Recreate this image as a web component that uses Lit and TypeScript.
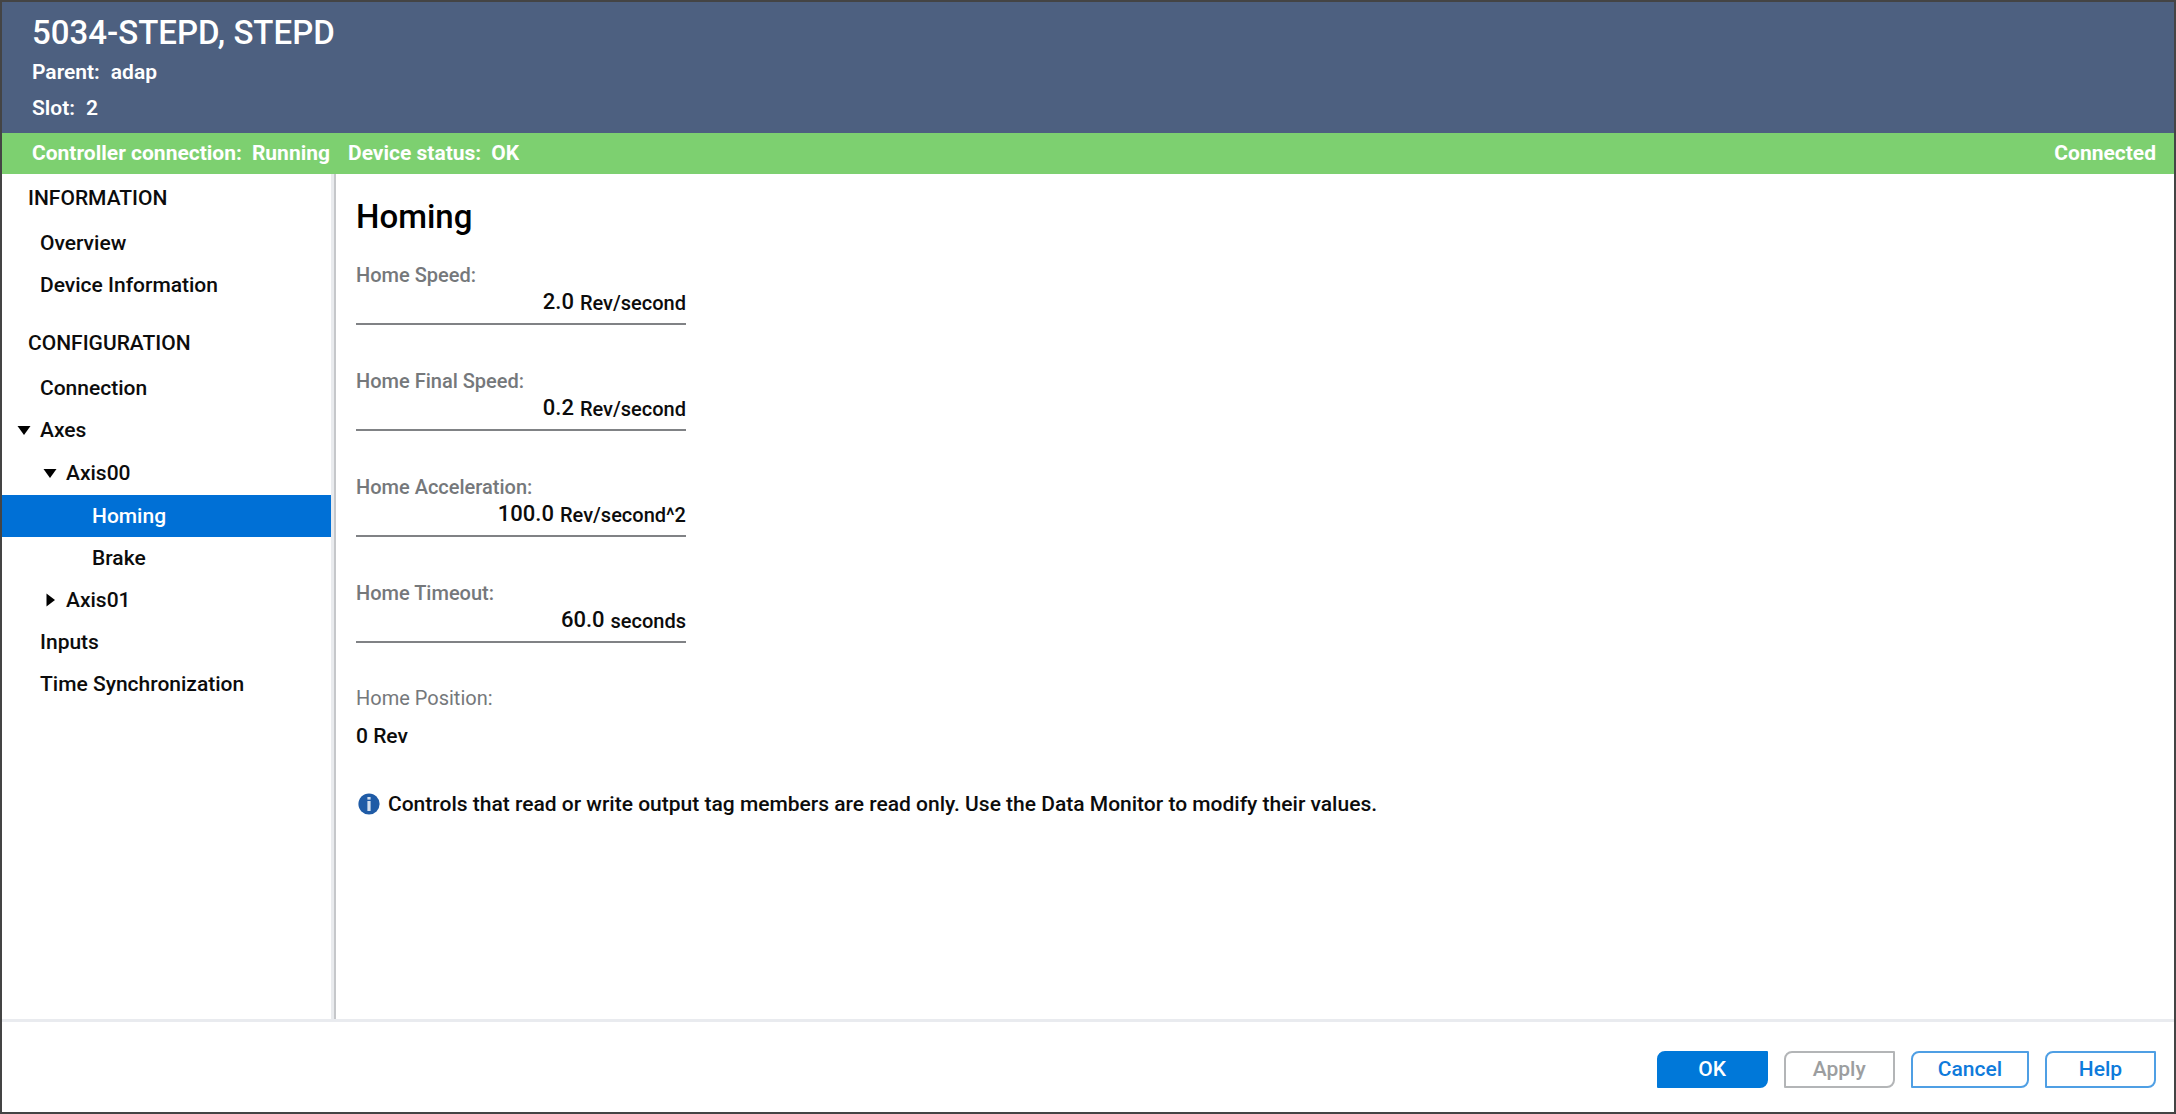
import { LitElement, html, css, svg, nothing } from "lit";
import { customElement, property, state } from "lit/decorators.js";
import { classMap } from "lit/directives/class-map.js";

interface NavNode {
  id: string;
  label: string;
  children?: NavNode[];
}

interface NavSection {
  title: string;
  items: NavNode[];
}

interface Field {
  id: string;
  label: string;
  value: string;
  unit: string;
}

const SECTIONS: NavSection[] = [
  {
    title: "INFORMATION",
    items: [
      { id: "overview", label: "Overview" },
      { id: "device-information", label: "Device Information" },
    ],
  },
  {
    title: "CONFIGURATION",
    items: [
      { id: "connection", label: "Connection" },
      {
        id: "axes",
        label: "Axes",
        children: [
          {
            id: "axis00",
            label: "Axis00",
            children: [
              { id: "homing", label: "Homing" },
              { id: "brake", label: "Brake" },
            ],
          },
          {
            id: "axis01",
            label: "Axis01",
            children: [],
          },
        ],
      },
      { id: "inputs", label: "Inputs" },
      { id: "time-synchronization", label: "Time Synchronization" },
    ],
  },
];

const FIELDS: Field[] = [
  { id: "home-speed", label: "Home Speed:", value: "2.0", unit: "Rev/second" },
  { id: "home-final-speed", label: "Home Final Speed:", value: "0.2", unit: "Rev/second" },
  { id: "home-acceleration", label: "Home Acceleration:", value: "100.0", unit: "Rev/second^2" },
  { id: "home-timeout", label: "Home Timeout:", value: "60.0", unit: "seconds" },
];

@customElement("device-header")
class DeviceHeader extends LitElement {
  static styles = css`
    :host {
      display: block;
      color: #fff;
      font-weight: 600;
    }
    .banner {
      background: #4d6080;
      padding: 11px 30px 7px;
    }
    .title {
      margin: 0 0 1px;
      font-size: 33px;
      line-height: 40px;
      font-weight: 500;
    }
    .facts {
      margin: 0;
    }
    .fact {
      display: flex;
      gap: 11px;
      font-size: 21px;
      line-height: 36px;
    }
    .fact-value {
      margin: 0;
    }
    .status {
      display: flex;
      gap: 18px;
      background: #7dd070;
      padding: 0 18px 0 30px;
      font-size: 21px;
      line-height: 41px;
      font-weight: 700;
    }
    .pair {
      display: flex;
      gap: 10px;
    }
    .connected {
      margin-left: auto;
    }
  `;

  render() {
    return html`
      <header class="banner">
        <h1 class="title">5034-STEPD, STEPD</h1>
        <dl class="facts">
          <div class="fact"><dt>Parent:</dt><dd class="fact-value">adap</dd></div>
          <div class="fact"><dt>Slot:</dt><dd class="fact-value">2</dd></div>
        </dl>
      </header>
      <div class="status" role="status">
        <span class="pair"><span>Controller connection:</span><span>Running</span></span>
        <span class="pair"><span>Device status:</span><span>OK</span></span>
        <span class="connected">Connected</span>
      </div>
    `;
  }
}

@customElement("device-nav")
class DeviceNav extends LitElement {
  @property() selected = "homing";
  @state() private open = new Set(["axes", "axis00"]);

  static styles = css`
    :host {
      display: block;
      font-size: 21px;
      font-weight: 500;
      color: #0c0c0c;
    }
    .section-title {
      margin: 0;
      padding: 6px 0 6px 26px;
      font-size: 21px;
      line-height: 36px;
      font-weight: 500;
    }
    .list {
      list-style: none;
      margin: 0;
      padding: 0 0 13px;
    }
    .list .list {
      padding: 1px 0 0;
    }
    .row {
      display: flex;
      align-items: center;
      height: 42px;
    }
    .level-0 {
      padding-left: 12px;
    }
    .level-1 {
      padding-left: 38px;
    }
    .level-2 {
      padding-left: 64px;
    }
    .row.selected {
      background: #0070d6;
      color: #fff;
    }
    .slot {
      flex: none;
      width: 26px;
      height: 20px;
    }
    .toggle {
      display: flex;
      align-items: center;
      border: 0;
      padding: 0 0 0 3px;
      background: none;
      color: inherit;
      cursor: pointer;
    }
    .arrow {
      display: block;
      width: 14px;
      height: 14px;
      fill: #000;
    }
    .link {
      flex: 1;
      color: inherit;
      text-decoration: none;
      line-height: 42px;
    }
  `;

  private toggle(id: string) {
    const next = new Set(this.open);
    if (!next.delete(id)) next.add(id);
    this.open = next;
  }

  private renderArrow(expanded: boolean) {
    return html`<svg class="arrow" viewBox="0 0 14 14" aria-hidden="true">
      ${expanded ? svg`<path d="M0.5 3h13L7 12z" />` : svg`<path d="M3.5 0.5v13L12 7z" />`}
    </svg>`;
  }

  private renderNode(node: NavNode, level: number): unknown {
    const expanded = this.open.has(node.id);
    const selected = node.id === this.selected;
    return html`<li>
      <div class=${classMap({ row: true, [`level-${level}`]: true, selected })}>
        ${node.children
          ? html`<button
              class="slot toggle"
              type="button"
              aria-label="Toggle ${node.label}"
              aria-expanded=${expanded ? "true" : "false"}
              @click=${() => this.toggle(node.id)}
            >
              ${this.renderArrow(expanded)}
            </button>`
          : html`<span class="slot"></span>`}
        <a class="link" href="#${node.id}" aria-current=${selected ? "page" : nothing}>${node.label}</a>
      </div>
      ${node.children?.length && expanded
        ? html`<ul class="list">${node.children.map((child) => this.renderNode(child, level + 1))}</ul>`
        : nothing}
    </li>`;
  }

  render() {
    return html`<nav aria-label="Device pages">
      ${SECTIONS.map(
        (section) => html`
          <h2 class="section-title">${section.title}</h2>
          <ul class="list">${section.items.map((item) => this.renderNode(item, 0))}</ul>
        `
      )}
    </nav>`;
  }
}

@customElement("homing-page")
class HomingPage extends LitElement {
  static styles = css`
    :host {
      display: block;
      padding: 20px 20px 40px;
      font-weight: 500;
      color: #0c0c0c;
    }
    .title {
      margin: 0 0 23px;
      font-size: 33px;
      line-height: 46px;
      font-weight: 500;
      color: #000;
    }
    .fields {
      display: grid;
      grid-template-columns: minmax(0, 330px);
      gap: 44px;
    }
    .label {
      display: block;
      font-size: 20px;
      line-height: 24px;
      color: #75787b;
    }
    .entry {
      display: flex;
      align-items: flex-start;
      gap: 6px;
      height: 36px;
      border-bottom: 2px solid #808285;
    }
    .value {
      flex: 1;
      min-width: 0;
      border: 0;
      padding: 0;
      background: none;
      font: inherit;
      font-size: 22px;
      height: 29px;
      line-height: 29px;
      text-align: right;
      color: inherit;
      outline: none;
    }
    .unit {
      font-size: 20px;
      line-height: 32px;
    }
    .position {
      margin: 43px 0 0;
    }
    .position-label {
      font-size: 20px;
      line-height: 24px;
      font-weight: 400;
      color: #75787b;
    }
    .position-value {
      margin: 13px 0 0;
      font-size: 21px;
      line-height: 26px;
    }
    .note {
      display: flex;
      align-items: center;
      gap: 8px;
      margin: 41px 0 0;
      padding-left: 2px;
      font-size: 21px;
      line-height: 28px;
    }
    .info {
      flex: none;
      width: 22px;
      height: 22px;
    }
  `;

  render() {
    return html`
      <h2 class="title">Homing</h2>
      <div class="fields">
        ${FIELDS.map(
          (field) => html`<div>
            <label class="label" for=${field.id}>${field.label}</label>
            <div class="entry">
              <input class="value" id=${field.id} type="text" readonly .value=${field.value} />
              <span class="unit">${field.unit}</span>
            </div>
          </div>`
        )}
      </div>
      <dl class="position">
        <dt class="position-label">Home Position:</dt>
        <dd class="position-value">0 Rev</dd>
      </dl>
      <p class="note">
        <svg class="info" viewBox="0 0 22 22" aria-hidden="true">
          <circle cx="11" cy="11" r="10.6" fill="#1f5ba6" />
          <rect x="9.4" y="4" width="3.2" height="2.6" fill="#d5e0ee" />
          <rect x="9.4" y="8" width="3.2" height="10" fill="#d5e0ee" />
        </svg>
        <span>Controls that read or write output tag members are read only. Use the Data Monitor to modify their values.</span>
      </p>
    `;
  }
}

@customElement("dialog-actions")
class DialogActions extends LitElement {
  static styles = css`
    :host {
      display: flex;
      justify-content: flex-end;
      gap: 16px;
      padding: 29px 18px 24px;
      border-top: 3px solid #e9ebef;
    }
    .button {
      box-sizing: border-box;
      min-width: 111px;
      height: 37px;
      padding: 0 25px 2px;
      border: 2px solid #4f9fe4;
      border-radius: 8px 1px;
      background: #fff;
      color: #0f7bdb;
      font: inherit;
      font-size: 21px;
      line-height: 30px;
      font-weight: 500;
    }
    .primary {
      border-color: #0078d9;
      background: #0078d9;
      color: #fff;
    }
    .button:disabled {
      border-color: #b3b5b7;
      color: #9c9ea0;
    }
  `;

  render() {
    return html`
      <button class="button primary" type="button">OK</button>
      <button class="button" type="button" disabled>Apply</button>
      <button class="button" type="button">Cancel</button>
      <button class="button" type="button">Help</button>
    `;
  }
}

@customElement("app-root")
class AppRoot extends LitElement {
  static styles = css`
    :host {
      display: flex;
      flex-direction: column;
      box-sizing: border-box;
      min-height: 100vh;
      border: 2px solid #444;
      background: #fff;
      font-family: Roboto, "Liberation Sans", sans-serif;
    }
    .body {
      flex: 1;
      display: grid;
      grid-template-columns: 329px minmax(0, 1fr);
    }
    .content {
      border-left: 3px solid #e9ebee;
    }
    .page {
      border-left: 2px solid #c5c7ca;
      height: 100%;
      box-sizing: border-box;
    }
  `;

  render() {
    return html`
      <device-header></device-header>
      <div class="body">
        <device-nav selected="homing"></device-nav>
        <main class="content"><homing-page class="page"></homing-page></main>
      </div>
      <dialog-actions></dialog-actions>
    `;
  }
}
